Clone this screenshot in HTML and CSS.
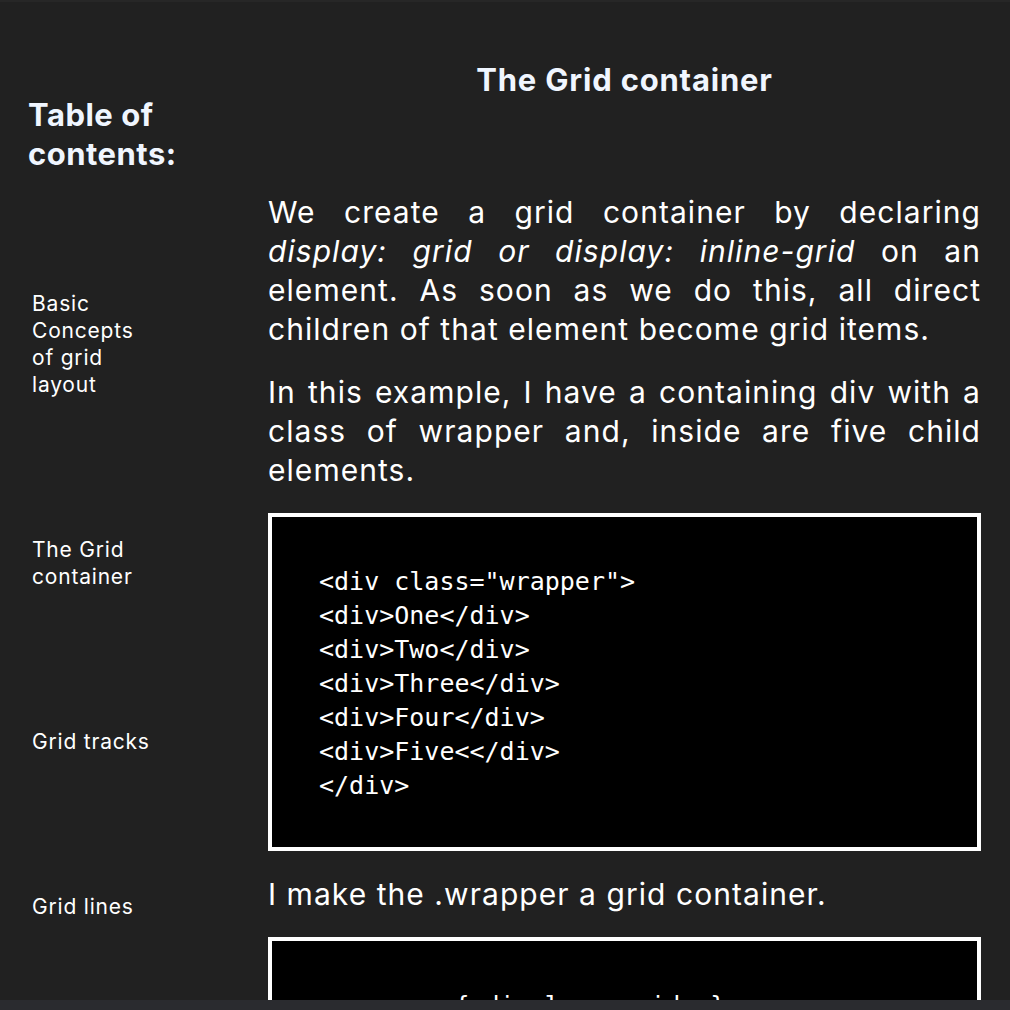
FILE: index.html
```html
<!DOCTYPE html>
<html lang="en">
<head>
<meta charset="utf-8">
<title>The Grid container</title>
<link rel="stylesheet" href="styles.css">
</head>
<body>
<div class="page">
  <aside class="toc">
    <h2 class="toc-title">Table of contents:</h2>
    <ul class="toc-list">
      <li><a href="#basic">Basic Concepts of grid layout</a></li>
      <li><a href="#container">The Grid container</a></li>
      <li><a href="#tracks">Grid tracks</a></li>
      <li><a href="#lines">Grid lines</a></li>
    </ul>
  </aside>
  <main class="content">
    <h1 class="title">The Grid container</h1>
    <div class="body">
      <p>We create a grid container by declaring <em>display: grid or display: inline-grid</em> on an element. As soon as we do this, all direct children of that element become grid items.</p>
      <p>In this example, I have a containing div with a class of wrapper and, inside are five child elements.</p>
      <pre class="code">&lt;div class="wrapper"&gt;
&lt;div&gt;One&lt;/div&gt;
&lt;div&gt;Two&lt;/div&gt;
&lt;div&gt;Three&lt;/div&gt;
&lt;div&gt;Four&lt;/div&gt;
&lt;div&gt;Five&lt;&lt;/div&gt;
&lt;/div&gt;</pre>
      <p>I make the .wrapper a grid container.</p>
      <pre class="code">.wrapper { display: grid; }</pre>
    </div>
  </main>
</div>
<div class="bottom-bar"></div>
</body>
</html>
```
FILE: styles.css
```css
html, body {
  margin: 0;
  padding: 0;
  background: #212121;
}

body {
  font-family: Inter, "Noto Sans", sans-serif;
  color: #ffffff;
}

.page {
  border-top: 2px solid #272727;
  display: grid;
  grid-template-columns: 268px 713px;
  min-height: 1100px;
}

.toc {
  padding: 93px 0 0 28px;
  display: flex;
  flex-direction: column;
  gap: 117px;
}

.toc-title {
  margin: 0;
  width: 190px;
  font-size: 31px;
  line-height: 39px;
  font-weight: 700;
  letter-spacing: 0.5px;
  color: #f0f6ff;
}

.toc-list {
  list-style: none;
  margin: 0;
  padding: 0 0 0 4px;
  width: 122px;
  display: flex;
  flex-direction: column;
  gap: 138px;
}

.toc-list a {
  color: #ffffff;
  text-decoration: none;
  font-size: 21px;
  line-height: 27px;
  letter-spacing: 0.8px;
  display: block;
}

.content {
  padding-top: 58px;
  display: flex;
  flex-direction: column;
  gap: 94px;
}

.title {
  margin: 0;
  text-align: center;
  font-size: 31px;
  line-height: 39px;
  font-weight: 700;
  letter-spacing: 0.8px;
  color: #f0f6ff;
}

.body {
  display: flex;
  flex-direction: column;
  gap: 23.5px;
}

.body p {
  margin: 0;
  font-size: 30px;
  line-height: 39px;
  letter-spacing: 1.05px;
  text-align: justify;
  color: #ffffff;
}

.code {
  margin: 0;
  background: #000000;
  border: 4px solid #ffffff;
  padding: 48px 47px 44px;
  font-family: "DejaVu Sans Mono", monospace;
  font-size: 25px;
  line-height: 34px;
  color: #ffffff;
}

.bottom-bar {
  position: fixed;
  left: 0;
  right: 0;
  bottom: 0;
  height: 10px;
  background: #2a2b2f;
}
```
